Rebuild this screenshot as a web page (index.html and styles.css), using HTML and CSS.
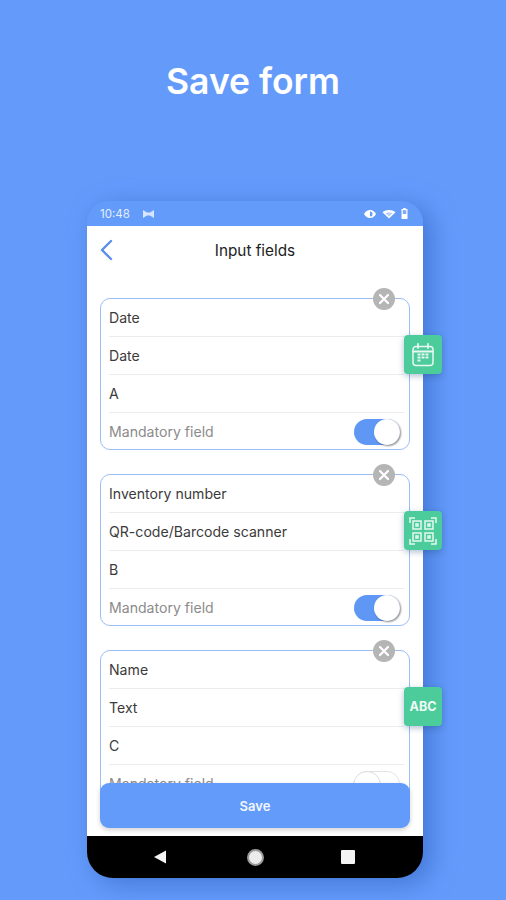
FILE: index.html
```html
<!DOCTYPE html>
<html>
<head>
    <meta charset="utf-8">
    <meta name="viewport" content="width=device-width, initial-scale=1">
    <title>Save form</title>
    <link rel="stylesheet" href="styles.css">
</head>
<body>
    <h1 class="headline">Save form</h1>

    <div class="phone">
        <div class="status-bar">
            <span class="status-bar__time">10:48</span>
            <svg class="status-bar__cast" width="13" height="10" viewBox="0 0 13 10"><path d="M1 1v8l4-2.500h3L12 9V1L8 3.500H5z" fill="#d7e5fd"/></svg>
            <div class="status-bar__icons">
                <svg width="14" height="10" viewBox="0 0 14 10"><path d="M1 5c1.500-2.700 3.500-4 6-4s4.500 1.300 6 4c-1.500 2.700-3.500 4-6 4S2.500 7.700 1 5z" fill="#fff"/><path d="M7 2.500v5a2.500 2.500 0 0 0 0-5z" fill="#639bfa"/></svg>
                <svg width="14" height="10" viewBox="0 0 14 10"><path d="M.5 3.200C2.400 1.700 4.500 1 7 1s4.600.7 6.500 2.200L7 9.500z" fill="#fff"/><path d="M3.500 4.200c2.200-1.200 4.800-1.200 7 0L7 7.500z" fill="#639bfa" opacity=".45"/></svg>
                <svg width="7" height="11" viewBox="0 0 7 11"><path d="M2.300 0h2.400v1H6.500v10H.5V1h1.800z" fill="#fff"/><path d="M1.700 2.200h3.600V6H1.700z" fill="#7eabf7"/></svg>
            </div>
        </div>

        <div class="screen">
            <header class="top-bar">
                <svg class="top-bar__back" width="14" height="22" viewBox="0 0 14 22"><path d="M12 2L3 11l9 9" fill="none" stroke="#5a8fe8" stroke-width="2.400" stroke-linecap="round" stroke-linejoin="round"/></svg>
                <span class="top-bar__title">Input fields</span>
            </header>

            <section class="field-card">
                <div class="field-card__row">Date</div>
                <div class="field-card__row">Date</div>
                <div class="field-card__row">A</div>
                <div class="field-card__row field-card__row--toggle">
                    <span class="field-card__muted">Mandatory field</span>
                    <span class="toggle toggle--on"></span>
                </div>
                <span class="remove-btn"><svg width="12" height="12" viewBox="0 0 12 12"><path d="M2 2l8 8M10 2l-8 8" stroke="#fff" stroke-width="2.200" stroke-linecap="round"/></svg></span>
                <span class="type-badge">
                    <svg width="26" height="26" viewBox="0 0 26 26" fill="none" stroke="#e6f8f1"><rect x="3" y="4.500" width="20" height="19" rx="3" stroke-width="1.500"/><path d="M3 9.500h20M8 2v4M18 2v4" stroke-width="1.800" stroke-linecap="round"/><path d="M7.500 12.500h3M11.500 12.500h3M15.500 12.500h3M7.500 15.500h3M11.500 15.500h3M15.500 15.500h3M7.500 18.500h3" stroke-width="2"/></svg>
                </span>
            </section>

            <section class="field-card">
                <div class="field-card__row">Inventory number</div>
                <div class="field-card__row">QR-code/Barcode scanner</div>
                <div class="field-card__row">B</div>
                <div class="field-card__row field-card__row--toggle">
                    <span class="field-card__muted">Mandatory field</span>
                    <span class="toggle toggle--on"></span>
                </div>
                <span class="remove-btn"><svg width="12" height="12" viewBox="0 0 12 12"><path d="M2 2l8 8M10 2l-8 8" stroke="#fff" stroke-width="2.200" stroke-linecap="round"/></svg></span>
                <span class="type-badge">
                    <svg width="30" height="30" viewBox="0 0 30 30" fill="none" stroke="#e6f8f1"><path d="M2 7V2h5M23 2h5v5M28 23v5h-5M7 28H2v-5" stroke-width="1.500"/><path d="M5 5h8v8H5zM17 5h8v8h-8zM5 17h8v8H5zM17 17h8v8h-8z" stroke-width="1.500"/><path d="M8 8h2v2H8zM20 8h2v2h-2zM8 20h2v2H8zM20 20h2v2h-2z" stroke-width="1.500"/></svg>
                </span>
            </section>

            <section class="field-card">
                <div class="field-card__row">Name</div>
                <div class="field-card__row">Text</div>
                <div class="field-card__row">C</div>
                <div class="field-card__row field-card__row--toggle">
                    <span class="field-card__muted">Mandatory field</span>
                    <span class="toggle toggle--off"></span>
                </div>
                <span class="remove-btn"><svg width="12" height="12" viewBox="0 0 12 12"><path d="M2 2l8 8M10 2l-8 8" stroke="#fff" stroke-width="2.200" stroke-linecap="round"/></svg></span>
                <span class="type-badge type-badge--text">ABC</span>
            </section>

            <button class="save-btn">Save</button>
        </div>

        <nav class="nav-bar">
            <svg class="nav-bar__back" width="14" height="16" viewBox="0 0 14 16"><path d="M13 1.500v13L1 8z" fill="#f4f4f4"/></svg>
            <span class="nav-bar__home"></span>
            <span class="nav-bar__recent"></span>
        </nav>
    </div>
</body>
</html>
```

FILE: styles.css
```css
* {
    box-sizing: border-box;
}

body {
    margin: 0;
    height: 900px;
    overflow: hidden;
    background-color: #649bfb;
    font-family: Inter, "Noto Sans", sans-serif;
    color: #3b3b3b;
}

.headline {
    margin: 0;
    padding-top: 61px;
    height: 201px;
    font-size: 35.500px;
    line-height: 42px;
    font-weight: 600;
    text-align: center;
    color: #fff;
}

.phone {
    width: 336px;
    margin: 0 0 0 87px;
    border-radius: 22px 22px 26px 26px;
    box-shadow: 8px 6px 24px rgba(45, 95, 190, .6);
}

.status-bar {
    display: flex;
    align-items: center;
    height: 25px;
    padding: 0 15px 0 13px;
    background-color: #639bfa;
    border-radius: 22px 22px 0 0;
    color: #e4eefe;
    font-size: 11.500px;
}

.status-bar__cast {
    margin-left: 12px;
}

.status-bar__icons {
    display: flex;
    align-items: center;
    gap: 5px;
    margin-left: auto;
}

.screen {
    position: relative;
    height: 610px;
    padding: 0 13px;
    background-color: #fff;
}

.top-bar {
    position: relative;
    display: flex;
    align-items: center;
    justify-content: center;
    height: 48px;
    margin-bottom: 24px;
}

.top-bar__back {
    position: absolute;
    left: -1px;
    top: 13px;
}

.top-bar__title {
    font-size: 15.300px;
    color: #222;
}

.field-card {
    position: relative;
    height: 152px;
    margin-bottom: 24px;
    padding: 0 5px 0 8px;
    border: 1px solid #9dbdf9;
    border-radius: 10px;
}

.field-card__row {
    display: flex;
    align-items: center;
    height: 38px;
    padding-bottom: 1px;
    border-bottom: 1px solid #ececec;
    font-size: 14.100px;
}

.field-card__row--toggle {
    justify-content: space-between;
    padding-bottom: 0;
    border-bottom: 0;
}

.field-card__muted {
    color: #8b8b8b;
    padding-bottom: 2px;
}

.toggle {
    position: relative;
    width: 46px;
    height: 26px;
    margin-right: 4px;
    border-radius: 13px;
}

.toggle::after {
    content: '';
    position: absolute;
    right: 0;
    top: 0;
    width: 26px;
    height: 26px;
    border-radius: 50%;
    background-color: #fff;
    box-shadow: 1px 1px 2px rgba(0, 0, 0, .45);
}

.toggle--on {
    background-color: #5f97f5;
}

.toggle--off {
    border: 1px solid #e3e3e3;
    background-color: #fff;
}

.toggle--off::after {
    left: -2px;
    right: auto;
    top: -1px;
    border: 1px solid #ddd;
    box-shadow: none;
}

.remove-btn {
    position: absolute;
    top: -11px;
    right: 14px;
    display: flex;
    align-items: center;
    justify-content: center;
    width: 22px;
    height: 22px;
    border-radius: 50%;
    background-color: #b5b5b5;
}

.type-badge {
    position: absolute;
    top: 36px;
    right: -33px;
    display: flex;
    align-items: center;
    justify-content: center;
    width: 38px;
    height: 39px;
    border-radius: 4px;
    background-color: #4ccb9b;
    box-shadow: 0 2px 6px rgba(30, 70, 120, .35);
}

.type-badge--text {
    color: #f0fbf7;
    font-size: 12.500px;
    font-weight: 700;
}

.save-btn {
    position: absolute;
    left: 13px;
    right: 13px;
    bottom: 8px;
    height: 45px;
    border: 0;
    border-radius: 9px;
    background-color: #639bfa;
    box-shadow: 0 2px 5px rgba(0, 0, 0, .18);
    color: #f2f6fe;
    font-family: inherit;
    font-size: 13px;
    font-weight: 600;
}

.nav-bar {
    display: flex;
    align-items: center;
    justify-content: space-between;
    height: 42px;
    padding: 0 68px;
    background-color: #000;
    border-radius: 0 0 26px 26px;
}

.nav-bar__back {
    margin: 0 2px 0 -2px;
}

.nav-bar__home {
    width: 17px;
    height: 17px;
    border-radius: 50%;
    background-color: #ececec;
    border: 2px solid #9a9a9a;
}

.nav-bar__recent {
    width: 14px;
    height: 14px;
    border-radius: 1px;
    background-color: #f4f4f4;
}
```
